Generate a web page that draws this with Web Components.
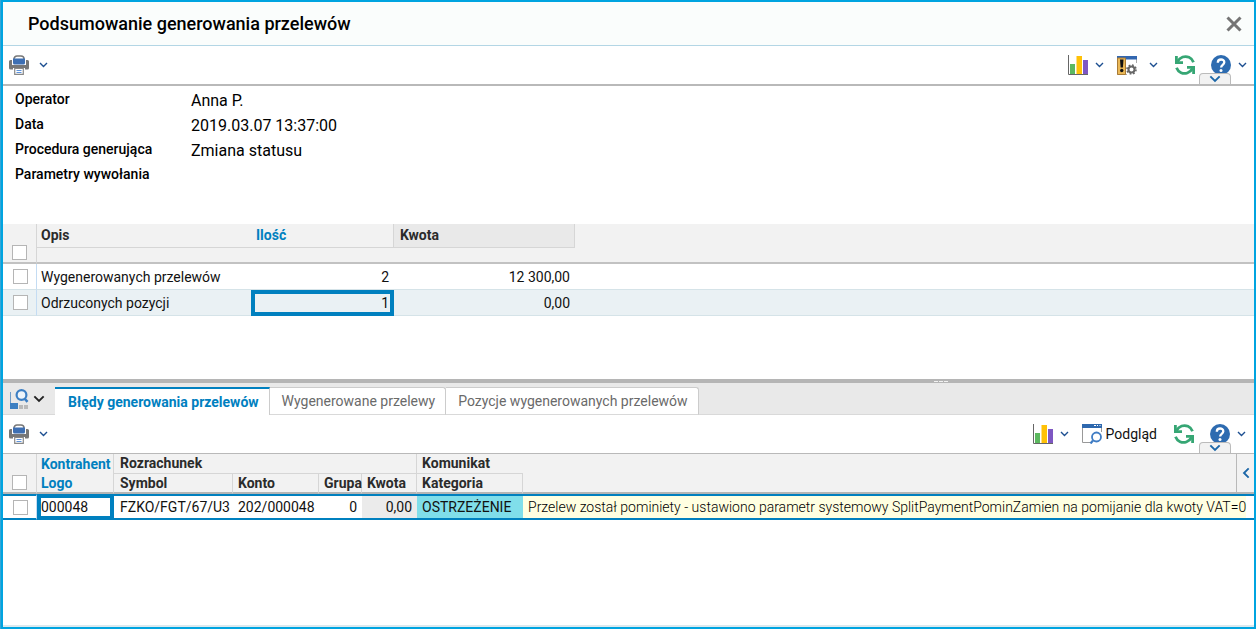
<!DOCTYPE html>
<html lang="pl">
<head>
<meta charset="utf-8">
<title>Podsumowanie generowania przelewów</title>
<style>
html, body { margin: 0; }
body { font: 14px/20px Roboto, "Liberation Sans", sans-serif; color: #111; background: #fff; }
</style>
</head>
<body>
<app-window heading="Podsumowanie generowania przelewów">
  <tool-bar slot="tools">
    <tool-button slot="start" icon="printer" label="Drukuj" menu="wide"></tool-button>
    <tool-button icon="chart" label="Wykresy" menu></tool-button>
    <tool-button icon="settings" label="Ustawienia" menu="wide"></tool-button>
    <tool-button icon="refresh" label="Odśwież"></tool-button>
    <tool-button icon="help" label="Pomoc" menu></tool-button>
  </tool-bar>
  <info-list>
    <info-row label="Operator">Anna P.</info-row>
    <info-row label="Data">2019.03.07 13:37:00</info-row>
    <info-row label="Procedura generująca">Zmiana statusu</info-row>
    <info-row label="Parametry wywołania"></info-row>
  </info-list>
  <summary-grid></summary-grid>
  <pane-splitter></pane-splitter>
  <tab-strip></tab-strip>
  <tool-bar compact>
    <tool-button slot="start" icon="printer" label="Drukuj" menu="wide"></tool-button>
    <tool-button icon="chart" label="Wykresy" menu></tool-button>
    <tool-button icon="preview" label="Podgląd">Podgląd</tool-button>
    <tool-button icon="refresh" label="Odśwież"></tool-button>
    <tool-button icon="help" label="Pomoc" menu></tool-button>
  </tool-bar>
  <error-grid></error-grid>
</app-window>

<script>
const ICONS = {
  printer: `<path d="M5 5V4a3 3 0 0 1 3-3h4a3 3 0 0 1 3 3v1" fill="#fff" stroke="#777" stroke-width="1.5"/>
    <path d="M0 6.5Q0 5 1.5 5H3v5h14V5h1.5Q20 5 20 6.5V13q0 1.500-1.500 1.500H16V13H4v1.500H1.500Q0 14.500 0 13z" fill="#777"/>
    <path d="M4 3.500h12V8q0 1.500-1.500 1.500h-9Q4 9.500 4 8z" fill="#3d6fb3"/>
    <path d="M5.700 13.500h8.600v5.800H5.700z" fill="#fff" stroke="#888" stroke-width="1.200"/>
    <path d="M7.500 15.500h5M7.500 17.500h5" stroke="#5d93dc"/>`,
  chart: `<path d="M.5 0v19.500H20" fill="none" stroke="#666"/>
    <path d="M2 9h5v10H2z" fill="#5cb85f"/><path d="M8.500 1h5.500v18H8.500z" fill="#ffc107"/><path d="M15 5h5v14h-5z" fill="#7e57c2"/>`,
  settings: `<path d="M.5 1.500h19V8M.5 1.500v18H10" fill="#fff" stroke="#aaa"/><path d="M0 1h20v3.500H0z" fill="#3367b0"/>
    <path d="M.5 3h8v16.500h-8z" fill="#eab857" stroke="#a97b35"/>
    <path d="M3 4.500h3.500l-.6 8H3.600z" fill="#111"/><circle cx="4.750" cy="15.500" r="1.700" fill="#111"/>
    <circle cx="14.500" cy="14.500" r="3" fill="#fff" stroke="#666" stroke-width="2"/>
    <circle cx="14.500" cy="14.500" r="4.500" fill="none" stroke="#666" stroke-width="1.600" stroke-dasharray="1.767"/>`,
  refresh: `<g fill="none" stroke="#36a674" stroke-width="2.800"><path d="M2.500 6.500C5 2 10 .500 14 2.300q3 1.300 4.500 5"/><path d="M17.500 13.500c-2.500 4.500-7.500 6-11.500 4.200q-3-1.300-4.500-5"/>
    <path d="M1.400 1v6.600H8"/><path d="M18.600 19v-6.600H12"/></g>`,
  help: `<circle cx="10" cy="10" r="10" fill="#2d6bb0"/>
    <path d="M6.800 7.700C6.800 3.400 13.300 3.600 13.300 7.300c0 2.500-3.200 2.600-3.200 5.200" fill="none" stroke="#fff" stroke-width="2.300"/><circle cx="10" cy="15.400" r="1.500" fill="#fff"/>`,
  preview: `<path d="M.5 1v17.500h8M19.500 4v4" fill="none" stroke="#999"/><path d="M0 0h20v4H0z" fill="#2e68ae"/>
    <path d="M12 1.500h2M15 1.500h1M17.500 1.500h1" stroke="#fff"/>
    <circle cx="14.500" cy="13" r="4.500" fill="#fff" stroke="#3f7cc4" stroke-width="1.800"/><path d="M11 16.500L8.500 19.500" stroke="#3f7cc4" stroke-width="2.200"/>`,
  view: `<path d="M1.500 3v12" stroke="#6f9cc8"/><path d="M1 14h8v6H1z" fill="#3d7fc2"/><path d="M10 16h4v4h-4zM15 16h4v4h-4z" fill="#b9b9b9"/>
    <circle cx="12.500" cy="6" r="4.900" fill="#eef5fb" stroke="#3c7fc4" stroke-width="2.200"/><path d="M15.500 9.500l3 3.300" stroke="#3c7fc4" stroke-width="2.600"/>`,
  close: `<path d="M3.500 3.500l13 13M16.500 3.500l-13 13" stroke="#757575" stroke-width="3"/>`
};

function define(name, html, setup) {
  const template = document.createElement('template');
  template.innerHTML = html;
  customElements.define(name, class extends HTMLElement {
    connectedCallback() {
      if (this.shadowRoot) return;
      const root = this.attachShadow({ mode: 'open' });
      root.append(template.content.cloneNode(true));
      if (setup) setup(this, root);
    }
  });
}

define('ui-icon', `<style>
  :host { display: block; width: 20px; height: 20px; flex: none; }
  svg { display: block; width: 100%; height: 100%; }
  </style><svg viewBox="0 0 20 20" aria-hidden="true"></svg>`,
  (el, root) => { root.querySelector('svg').innerHTML = ICONS[el.getAttribute('name')] || ''; });

define('ui-chevron', `<style>
  :host { display: block; width: 9px; height: 6px; flex: none; color: #1d4f91; }
  :host([size="large"]) { width: 12px; height: 8px; }
  :host([left]) { transform: rotate(90deg); }
  svg { display: block; width: 100%; height: 100%; }
  </style><svg viewBox="0 0 9 6" aria-hidden="true"><path d="M1 1l3.500 3.500L8 1" fill="none" stroke="currentColor" stroke-width="1.400"/></svg>`);

define('app-window', `<style>
  :host { box-sizing: border-box; min-height: 100vh; border-left: 1px solid #35a5d6; display: flex; }
  .frame { flex: 1; min-width: 0; border: 2px solid #00a4e0; display: flex; flex-direction: column; box-sizing: border-box; }
  header { display: flex; align-items: center; justify-content: space-between; height: 43px; padding: 0 10px 0 25px; background: #fafdfc; border-bottom: 1px solid #b3d6e5; }
  h1 { margin: 0; font-size: 18px; line-height: 24px; font-weight: 500; color: #000; }
  button { border: 0; background: none; padding: 0; }
  main { flex: 1; display: flex; flex-direction: column; border-bottom: 2px solid #dbe9ee; }
  </style>
  <div class="frame">
    <header><h1></h1><button aria-label="Zamknij"><ui-icon name="close"></ui-icon></button></header>
    <slot name="tools"></slot>
    <main><slot></slot></main>
  </div>`,
  (el, root) => { root.querySelector('h1').textContent = el.getAttribute('heading'); });

define('tool-bar', `<style>
  :host { display: flex; justify-content: space-between; align-items: center; position: relative; height: 38px; padding: 0 7px 0 6px; border-bottom: 2px solid #b9b9b9; }
  :host([compact]) { border-bottom: 1px solid #b9b9b9; padding-right: 8px; }
  .end { display: flex; gap: 16px; align-items: center; }
  .more { position: absolute; right: 23px; bottom: 0; width: 32px; height: 11px; padding: 0; display: flex; align-items: center; justify-content: center;
    background: #f2f2f2; border: 1px solid #bbb; border-bottom: 0; border-radius: 4px 4px 0 0; }
  .more ui-chevron { color: #1c67a8; }
  </style>
  <slot name="start"></slot><div class="end"><slot></slot></div>
  <button class="more" aria-label="Więcej"><ui-chevron size="large"></ui-chevron></button>`);

define('tool-button', `<style>
  :host { display: block; }
  button { display: flex; align-items: center; gap: 7px; border: 0; background: none; padding: 0; font: inherit; font-size: 14px; color: #111; }
  :host([menu="wide"]) button { gap: 10px; }
  :host([icon="settings"]) button { gap: 12px; }
  :host([icon="settings"]) { margin: 0 1px 0 -3px; }
  :host([icon="preview"]) button { gap: 4px; }
  :host([icon="preview"]) { margin: 0 1px 0 -3px; }
  :host(:not([menu])) ui-chevron { display: none; }
  </style><button><ui-icon></ui-icon><slot></slot><ui-chevron></ui-chevron></button>`,
  (el, root) => {
    const icon = document.createElement('ui-icon');
    icon.setAttribute('name', el.getAttribute('icon'));
    root.querySelector('ui-icon').replaceWith(icon);
    root.querySelector('button').setAttribute('aria-label', el.getAttribute('label'));
  });

define('info-list', `<style>:host { display: block; padding: 1px 12px 37px; }</style><slot></slot>`);

define('info-row', `<style>
  :host { display: grid; grid-template-columns: 176px 1fr; height: 25px; color: #000; }
  .label { font-size: 14px; line-height: 25px; font-weight: 500; }
  .value { font-size: 16px; line-height: 28px; }
  </style><span class="label"></span><span class="value"><slot></slot></span>`,
  (el, root) => { root.querySelector('.label').textContent = el.getAttribute('label'); });

const GRID_CSS = `
  table { width: 100%; table-layout: fixed; border-collapse: separate; border-spacing: 0; }
  th, td { box-sizing: border-box; padding: 0 5px; font-size: 14px; line-height: 18px; white-space: nowrap; text-align: left; }
  th { background: #f2f2f2; font-weight: 700; color: #2b2b2b; }
  td { color: #111; }
  .num { text-align: right; }
  .blue { color: #0080bf; }
  .sel { border-right: 1px solid #d6d6d6; vertical-align: bottom; padding: 0 0 2px 9px; }
  td.sel { border-right-color: #c4dcf3; vertical-align: middle; padding: 0 0 0 10px; }
  input { display: block; appearance: none; box-sizing: border-box; width: 15px; height: 15px; margin: 0; border: 1px solid #b5b5b5; background: #fff; }`;

define('summary-grid', `<style>:host { display: block; padding-bottom: 63px; }${GRID_CSS}
  thead tr:first-child th { height: 24px; }
  thead tr:first-child .cap { border-bottom: 1px solid #d6d6d6; padding-bottom: 1px; }
  th:nth-child(2), td:nth-child(2) { padding-left: 4px; }
  thead .edge { border-right: 1px solid #d6d6d6; }
  thead .pale { background: #e9e9e9; padding-left: 6px; }
  thead tr:last-child th, thead .sel { height: 16px; border-bottom: 2px solid #c2c2c2; }
  tbody td { height: 26px; border-bottom: 1px solid #d5e3e8; }
  tbody .current td { background: #eaf1f4; }
  td.focus { border: 4px solid #0080bf !important; padding-right: 1px; line-height: 16px; }
  </style>
  <table><colgroup><col style="width:34px"><col style="width:214px"><col style="width:143px"><col style="width:181px"><col></colgroup>
  <thead><tr><th class="sel" rowspan="2"><input type="checkbox" aria-label="Zaznacz wszystko"></th>
    <th class="cap">Opis</th><th class="cap edge blue">Ilość</th><th class="cap edge pale">Kwota</th><th></th></tr>
    <tr><th colspan="4"></th></tr></thead>
  <tbody><tr><td class="sel"><input type="checkbox" aria-label="Wygenerowanych przelewów"></td><td>Wygenerowanych przelewów</td><td class="num">2</td><td class="num">12 300,00</td><td></td></tr>
    <tr class="current"><td class="sel"><input type="checkbox" aria-label="Odrzuconych pozycji"></td><td>Odrzuconych pozycji</td><td class="num focus">1</td><td class="num">0,00</td><td></td></tr></tbody></table>`);

define('pane-splitter', `<style>
  :host { display: flex; justify-content: center; align-items: center; gap: 1px; height: 4px; background: #b5b5b5; padding-left: 50%; }
  i { width: 4px; height: 1px; background: #f2f2f2; }
  </style><i></i><i></i><i></i>`);

define('tab-strip', `<style>
  :host { display: flex; align-items: flex-end; height: 32px; background: #e9e9e9; }
  button { font: inherit; margin: 0; cursor: pointer; }
  .view { display: flex; align-items: center; gap: 4px; width: 52px; height: 32px; padding: 0 0 0 6px; border: 0; border-bottom: 1px solid #d9d9d9; background: none; box-sizing: border-box; flex: none; }
  .view ui-chevron { color: #222; }
  .tabs { display: flex; flex: none; }
  .tab { box-sizing: border-box; height: 28px; padding: 0 10px 0 12px; color: #6a6a6a; font-size: 14px; line-height: 20px; background: #fff;
    border: 1px solid #ccc; border-left: 0; border-bottom-color: #d9d9d9; border-radius: 0 3px 0 0; white-space: nowrap; }
  .tab[aria-selected="true"] { color: #0080bf; font-weight: 700; padding-left: 13px; border-top: 2px solid #0080bf; border-bottom: 0; border-radius: 0; }
  .rest { flex: 1; height: 31px; border-bottom: 1px solid #d9d9d9; }
  </style>
  <button class="view" aria-label="Widok"><ui-icon name="view"></ui-icon><ui-chevron size="large"></ui-chevron></button>
  <div class="tabs" role="tablist">
    <button class="tab" role="tab" aria-selected="true">Błędy generowania przelewów</button>
    <button class="tab" role="tab" aria-selected="false">Wygenerowane przelewy</button>
    <button class="tab" role="tab" aria-selected="false">Pozycje wygenerowanych przelewów</button>
  </div><div class="rest"></div>`);

define('error-grid', `<style>:host { display: block; position: relative; }${GRID_CSS}
  th { height: 20px; padding: 0 0 1px 5px; }
  th.blue { padding-left: 4px; }
  th.symbol, td.symbol { padding-left: 6px; }
  .cap { border-bottom: 1px solid #d6d6d6; }
  .edge { border-right: 1px solid #d6d6d6; }
  thead tr:last-child th, thead .end, thead .sel { border-bottom: 2px solid #b5b5b5; padding-bottom: 0; }
  thead .sel { padding: 0 0 2px 9px; }
  tbody td { height: 26px; border: solid #0080bf; border-width: 2px 0; }
  tbody td.sel { border-right: 1px solid #c4dcf3; padding: 0 0 0 10px; }
  td.focus { border-width: 4px; padding: 0; }
  td.pale { background: #ebebeb; }
  td.warn { background: #80deea; }
  td.message { background: #ffffe1; font-weight: 300; color: #000; }
  .side { position: absolute; right: 0; top: 0; width: 18px; height: 38px; padding: 0; border: 0; border-left: 1px solid #b9b9b9; background: #f2f2f2; display: flex; align-items: center; justify-content: center; }
  .side ui-chevron { color: #1c67a8; }
  </style>
  <table><colgroup><col style="width:34px"><col style="width:77px"><col style="width:119px"><col style="width:86px"><col style="width:43px"><col style="width:55px"><col style="width:106px"><col><col style="width:8px"></colgroup>
  <thead><tr><th class="sel" rowspan="2"><input type="checkbox" aria-label="Zaznacz wszystko"></th>
    <th class="blue edge">Kontrahent</th><th class="cap edge symbol" colspan="4">Rozrachunek</th><th class="cap">Komunikat</th><th class="end" colspan="2" rowspan="2"></th></tr>
    <tr><th class="blue edge">Logo</th><th class="edge symbol">Symbol</th><th class="edge">Konto</th><th class="edge">Grupa</th><th class="edge">Kwota</th><th class="edge">Kategoria</th></tr></thead>
  <tbody><tr><td class="sel"><input type="checkbox" aria-label="000048"></td><td class="focus">000048</td><td class="symbol">FZKO/FGT/67/U3</td><td>202/000048</td><td class="num">0</td><td class="num pale">0,00</td><td class="warn">OSTRZEŻENIE</td>
    <td class="message">Przelew został pominiety - ustawiono parametr systemowy SplitPaymentPominZamien na pomijanie dla kwoty VAT=0</td><td></td></tr></tbody></table>
  <button class="side" aria-label="Rozwiń panel"><ui-chevron left size="large"></ui-chevron></button>`);
</script>
</body>
</html>
